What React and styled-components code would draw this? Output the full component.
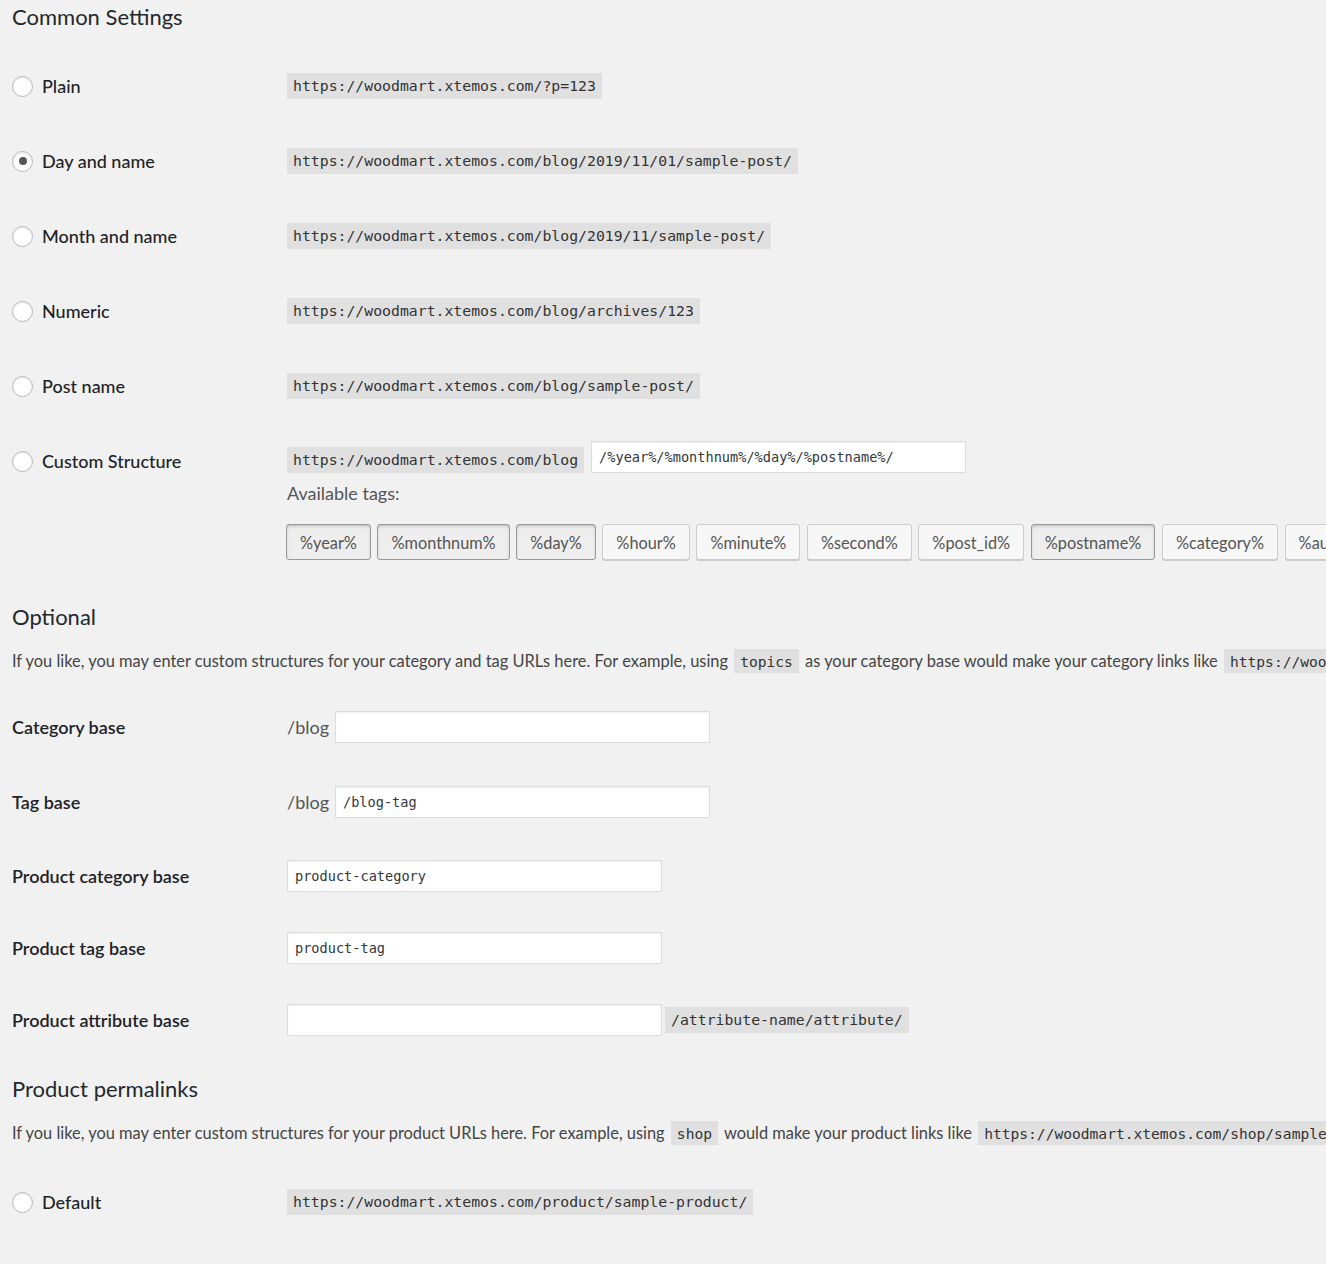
import React from "react";
import styled, { createGlobalStyle } from "styled-components";

const GlobalStyle = createGlobalStyle`
  html, body {
    margin: 0;
    padding: 0;
    background: #f1f1f1;
    overflow: hidden;
  }
  body {
    font-family: Lato, "Open Sans", sans-serif;
    color: #23282d;
  }
`;

const Page = styled.div`
  width: 1326px;
  box-sizing: border-box;
  padding: 0 12px;
  overflow: hidden;
`;

const SectionTitle = styled.h2`
  margin: ${(p) => p.$top}px 0 0;
  font-size: 22px;
  line-height: 28px;
  font-weight: 400;
  color: #23282d;
`;

const Intro = styled.p`
  margin: 18px 0 ${(p) => p.$mb}px;
  font-size: 16.4px;
  line-height: 24px;
  color: #444;
  white-space: nowrap;
`;

const InlineCode = styled.code`
  font-family: "DejaVu Sans Mono", monospace;
  font-size: 14.6px;
  background: #e0e0e0;
  padding: 4px 6px 3px;
  margin: 0 2px;
  color: #333;
`;

const Row = styled.div`
  display: grid;
  grid-template-columns: 275px 1fr;
  padding: ${(p) => p.$pad || "17px 0 18px"};
`;

const LabelCell = styled.div`
  height: 40px;
  display: flex;
  align-items: center;
  gap: 9px;
  font-size: 18px;
  font-weight: ${(p) => (p.$bold ? 600 : 500)};
  color: #1d2327;
  white-space: nowrap;
`;

const Radio = styled.span`
  width: 21px;
  height: 21px;
  box-sizing: border-box;
  border-radius: 50%;
  border: 1px solid #b4b9be;
  background: #fff;
  box-shadow: inset 0 1px 2px rgba(0, 0, 0, 0.1);
  display: flex;
  align-items: center;
  justify-content: center;
  flex: none;

  &::after {
    content: "";
    width: 8px;
    height: 8px;
    border-radius: 50%;
    background: #555;
    display: ${(p) => (p.$checked ? "block" : "none")};
  }
`;

const ValueCell = styled.div`
  display: flex;
  flex-direction: column;
  align-items: flex-start;
`;

const Line = styled.div`
  height: ${(p) => p.$h || 40}px;
  display: flex;
  align-items: ${(p) => p.$align || "center"};
  gap: ${(p) => p.$gap ?? 6}px;
  white-space: nowrap;
`;

const UrlCode = styled.code`
  display: inline-block;
  height: 26px;
  line-height: 26px;
  padding: 0 6px;
  margin-top: ${(p) => p.$mt || 0}px;
  background: #e0e0e0;
  font-family: "DejaVu Sans Mono", monospace;
  font-size: 14.8px;
  color: #333;
`;

const TextInput = styled.input`
  width: 375px;
  height: 32px;
  box-sizing: border-box;
  margin: 0;
  padding: 0 7px;
  border: 1px solid #ddd;
  background: #fff;
  box-shadow: inset 0 1px 2px rgba(0, 0, 0, 0.07);
  font-family: "DejaVu Sans Mono", monospace;
  font-size: 13.6px;
  color: #32373c;
  outline: none;
`;

const Prefix = styled.span`
  font-size: 18px;
  color: #555;
`;

const TagsLabel = styled.div`
  margin-top: 8px;
  font-size: 18px;
  line-height: 24px;
  color: #555;
`;

const TagList = styled.div`
  display: flex;
  gap: 6.6px;
  margin-top: 19px;
  margin-left: -1px;
  white-space: nowrap;
`;

const TagButton = styled.button`
  height: 36px;
  padding: 0 13px;
  border-radius: 3px;
  font-family: inherit;
  font-size: 16.3px;
  color: #555;
  cursor: pointer;
  flex: none;
  border: 1px solid ${(p) => (p.$active ? "#999" : "#ccc")};
  background: ${(p) => (p.$active ? "#eee" : "#f7f7f7")};
  box-shadow: ${(p) =>
    p.$active
      ? "inset 0 2px 5px -3px rgba(0, 0, 0, 0.5)"
      : "0 1px 0 #ccc"};
`;

const commonOptions = [
  { label: "Plain", url: "https://woodmart.xtemos.com/?p=123" },
  { label: "Day and name", url: "https://woodmart.xtemos.com/blog/2019/11/01/sample-post/", checked: true },
  { label: "Month and name", url: "https://woodmart.xtemos.com/blog/2019/11/sample-post/" },
  { label: "Numeric", url: "https://woodmart.xtemos.com/blog/archives/123" },
  { label: "Post name", url: "https://woodmart.xtemos.com/blog/sample-post/" },
];

const tags = [
  { name: "%year%", active: true },
  { name: "%monthnum%", active: true },
  { name: "%day%", active: true },
  { name: "%hour%" },
  { name: "%minute%" },
  { name: "%second%" },
  { name: "%post_id%" },
  { name: "%postname%", active: true },
  { name: "%category%" },
  { name: "%author%" },
];

const productOptions = [
  { label: "Default", url: "https://woodmart.xtemos.com/product/sample-product/" },
  { label: "Shop base", url: "https://woodmart.xtemos.com/shop/sample-product/" },
];

const RadioRow = ({ label, url, checked }) => (
  <Row>
    <LabelCell>
      <Radio $checked={checked} />
      {label}
    </LabelCell>
    <ValueCell>
      <Line>
        <UrlCode>{url}</UrlCode>
      </Line>
    </ValueCell>
  </Row>
);

const App = () => {
  return (
    <Page>
      <GlobalStyle />
      <SectionTitle $top={3}>Common Settings</SectionTitle>

      <Row $pad="18px 0 0" />
      {commonOptions.map((o) => (
        <RadioRow key={o.label} {...o} />
      ))}

      <Row>
        <LabelCell>
          <Radio />
          Custom Structure
        </LabelCell>
        <ValueCell>
          <Line $h={32} $align="flex-start" $gap={7}>
            <UrlCode $mt={6}>https://woodmart.xtemos.com/blog</UrlCode>
            <TextInput readOnly value="/%year%/%monthnum%/%day%/%postname%/" />
          </Line>
          <TagsLabel>Available tags:</TagsLabel>
          <TagList>
            {tags.map((t) => (
              <TagButton key={t.name} $active={t.active}>
                {t.name}
              </TagButton>
            ))}
          </TagList>
        </ValueCell>
      </Row>

      <SectionTitle $top={25}>Optional</SectionTitle>
      <Intro $mb={16}>
        If you like, you may enter custom structures for your category and tag URLs here. For example, using{" "}
        <InlineCode>topics</InlineCode> as your category base would make your category links like{" "}
        <InlineCode>https://woodmart.xtemos.com/blog/topics/uncategorized/</InlineCode>. If you leave these blank the defaults will be used.
      </Intro>

      <Row>
        <LabelCell $bold>Category base</LabelCell>
        <Line>
          <Prefix>/blog</Prefix>
          <TextInput readOnly value="" />
        </Line>
      </Row>
      <Row>
        <LabelCell $bold>Tag base</LabelCell>
        <Line>
          <Prefix>/blog</Prefix>
          <TextInput readOnly value="/blog-tag" />
        </Line>
      </Row>
      <Row $pad="16px 0">
        <LabelCell $bold>Product category base</LabelCell>
        <Line>
          <TextInput readOnly value="product-category" />
        </Line>
      </Row>
      <Row $pad="16px 0">
        <LabelCell $bold>Product tag base</LabelCell>
        <Line>
          <TextInput readOnly value="product-tag" />
        </Line>
      </Row>
      <Row $pad="16px 0">
        <LabelCell $bold>Product attribute base</LabelCell>
        <Line $gap={3}>
          <TextInput readOnly value="" />
          <UrlCode>/attribute-name/attribute/</UrlCode>
        </Line>
      </Row>

      <SectionTitle $top={19}>Product permalinks</SectionTitle>
      <Intro $mb={19}>
        If you like, you may enter custom structures for your product URLs here. For example, using{" "}
        <InlineCode>shop</InlineCode> would make your product links like{" "}
        <InlineCode>https://woodmart.xtemos.com/shop/sample-product/</InlineCode>. This setting affects product URLs only, not things such as product categories.
      </Intro>
      {productOptions.map((o) => (
        <RadioRow key={o.label} {...o} />
      ))}
    </Page>
  );
};

export default App;
